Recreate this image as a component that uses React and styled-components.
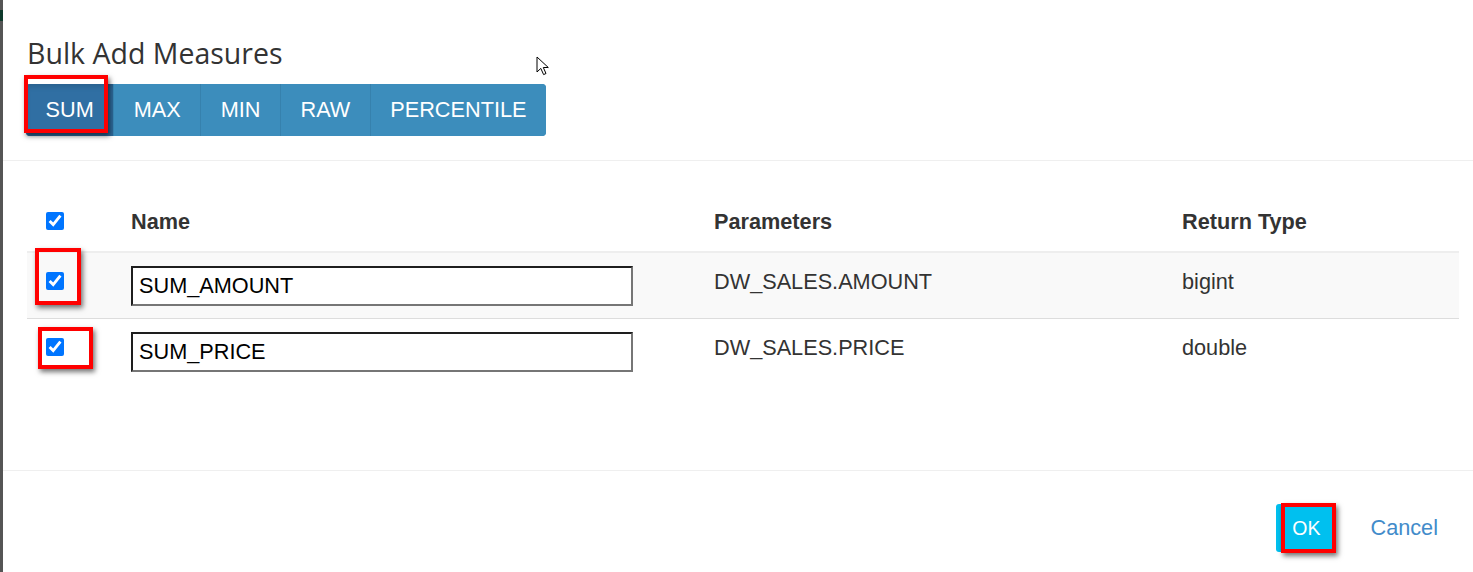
import React from "react";
import styled, { createGlobalStyle } from "styled-components";

const measureTypes = ["SUM", "MAX", "MIN", "RAW", "PERCENTILE"];

const measures = [
  { name: "SUM_AMOUNT", param: "DW_SALES.AMOUNT", type: "bigint", mark: { top: -24, left: -11, w: 46, h: 57 } },
  { name: "SUM_PRICE", param: "DW_SALES.PRICE", type: "double", mark: { top: -11, left: -8, w: 55, h: 42 } },
];

const App = () => {
  return (
    <Page>
      <GlobalStyle />
      <EdgeStrip />
      <Modal>
        <Header>
          <Title>Bulk Add Measures</Title>
          <ButtonGroup>
            {measureTypes.map((t) => (
              <TypeButton key={t} $active={t === "SUM"}>
                {t}
                {t === "SUM" && <Highlight $top={-9} $left={-2} $w={84} $h={58} />}
              </TypeButton>
            ))}
          </ButtonGroup>
          <Cursor width="14" height="20" viewBox="0 0 14 20">
            <path
              d="M1 1 L1 16 L4.8 12.4 L7.6 18.6 L10 17.5 L7.3 11.5 L12.3 11.5 Z"
              fill="#fff"
              stroke="#000"
              strokeWidth="1"
              strokeLinejoin="round"
            />
          </Cursor>
        </Header>

        <Body>
          <Table>
            <colgroup>
              <col style={{ width: 88 }} />
              <col style={{ width: 583 }} />
              <col style={{ width: 468 }} />
              <col style={{ width: 293 }} />
            </colgroup>
            <thead>
              <tr>
                <HeadCell>
                  <CheckWrap>
                    <Check type="checkbox" defaultChecked />
                  </CheckWrap>
                </HeadCell>
                <HeadCell>Name</HeadCell>
                <HeadCell>Parameters</HeadCell>
                <HeadCell>Return Type</HeadCell>
              </tr>
            </thead>
            <tbody>
              {measures.map((m) => (
                <Row key={m.name}>
                  <Cell>
                    <CheckWrap>
                      <Check type="checkbox" defaultChecked />
                      <Highlight $top={m.mark.top} $left={m.mark.left} $w={m.mark.w} $h={m.mark.h} />
                    </CheckWrap>
                  </Cell>
                  <Cell>
                    <NameInput type="text" defaultValue={m.name} />
                  </Cell>
                  <Cell>{m.param}</Cell>
                  <Cell>{m.type}</Cell>
                </Row>
              ))}
            </tbody>
          </Table>
        </Body>

        <Footer>
          <OkButton>
            OK
            <Highlight $top={-1} $left={5} $w={55} $h={50} />
          </OkButton>
          <CancelLink>Cancel</CancelLink>
        </Footer>
      </Modal>
    </Page>
  );
};

export default App;

const GlobalStyle = createGlobalStyle`
  body {
    margin: 0;
    background: #fff;
    font-family: "Liberation Sans", Arial, sans-serif;
    color: #333;
  }
`;

const Page = styled.div`
  display: flex;
  min-height: 100vh;
`;

const EdgeStrip = styled.div`
  width: 3px;
  flex-shrink: 0;
  background: linear-gradient(#555 0 10px, #0f3a2c 10px 21px, #555 21px);
`;

const Modal = styled.div`
  flex: 1;
  display: flex;
  flex-direction: column;
  background: #fff;
`;

const Header = styled.header`
  position: relative;
  padding: 38px 24px 24px 23px;
  border-bottom: 1px solid #efefef;
`;

const Title = styled.h4`
  margin: 0 0 15px 1px;
  font-family: "Open Sans", "Noto Sans", sans-serif;
  font-size: 28.5px;
  line-height: 31px;
  font-weight: 400;
  color: #333;
`;

const ButtonGroup = styled.div`
  display: inline-flex;
  height: 52px;
  border-radius: 4px;
  background: #3c8dbc;
`;

const TypeButton = styled.button`
  position: relative;
  padding: 0 19.5px;
  border: none;
  border-left: 1px solid #3681ad;
  background: ${({ $active }) => ($active ? "#306fa3" : "#3c8dbc")};
  box-shadow: ${({ $active }) => ($active ? "inset 0 3px 5px rgba(0, 0, 0, 0.125)" : "none")};
  color: #fff;
  font-family: "Liberation Sans", Arial, sans-serif;
  font-size: 21.7px;
  line-height: 52px;

  &:first-child {
    border-left: none;
    border-radius: 4px 0 0 4px;
  }

  &:last-child {
    border-radius: 0 4px 4px 0;
  }
`;

const Highlight = styled.span`
  position: absolute;
  top: ${({ $top }) => $top}px;
  left: ${({ $left }) => $left}px;
  width: ${({ $w }) => $w}px;
  height: ${({ $h }) => $h}px;
  box-sizing: border-box;
  border: 4px solid #ff0000;
  box-shadow: 2px 3px 5px rgba(0, 0, 0, 0.55);
  pointer-events: none;
`;

const Cursor = styled.svg`
  position: absolute;
  top: 56px;
  left: 533px;
`;

const Body = styled.section`
  padding: 32px 14px 86px 24px;
  border-bottom: 1px solid #efefef;
`;

const Table = styled.table`
  width: 1432px;
  table-layout: fixed;
  border-collapse: collapse;
  font-size: 21.7px;
  line-height: 31px;
  color: #333;
`;

const HeadCell = styled.th`
  padding: 13px 16px;
  text-align: left;
  vertical-align: top;
  font-weight: 700;
  border-bottom: 2px solid #eee;

  &:first-child {
    padding-left: 19px;
  }
`;

const Row = styled.tr`
  border-bottom: 1px solid #ddd;

  &:nth-child(odd) {
    background: #f9f9f9;
  }

  &:last-child {
    border-bottom: none;
  }
`;

const Cell = styled.td`
  padding: 13px 16px 12px;
  vertical-align: top;

  &:first-child {
    padding-left: 19px;
  }
`;

const CheckWrap = styled.span`
  position: relative;
  display: inline-block;
  margin-top: 6px;
  width: 18px;
  height: 18px;
`;

const Check = styled.input`
  display: block;
  width: 18px;
  height: 18px;
  margin: 0;
`;

const NameInput = styled.input`
  display: block;
  box-sizing: border-box;
  width: 502px;
  height: 40px;
  padding: 0 6px;
  border: 2px solid;
  border-color: #1e1e1e #767676 #767676 #1e1e1e;
  background: #fff;
  color: #000;
  font-family: "Liberation Sans", Arial, sans-serif;
  font-size: 21.7px;
  outline: none;
`;

const Footer = styled.footer`
  display: flex;
  justify-content: flex-end;
  align-items: center;
  gap: 34px;
  padding: 33px 35px 20px 0;
`;

const OkButton = styled.button`
  position: relative;
  height: 48px;
  padding: 0 16px;
  border: none;
  border-radius: 3px;
  background: #00c0ef;
  color: #fff;
  font-family: "Liberation Sans", Arial, sans-serif;
  font-size: 19.5px;
`;

const CancelLink = styled.a`
  color: #428bca;
  font-size: 21.7px;
  cursor: pointer;
`;
